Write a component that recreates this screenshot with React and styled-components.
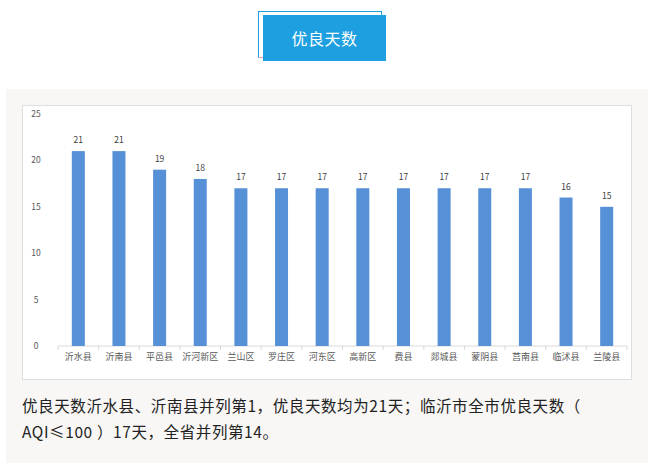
import React from "react";
import styled, { createGlobalStyle } from "styled-components";

const Global = createGlobalStyle`
  body { margin: 0; background: #fff; font-family: "Microsoft YaHei", "Noto Sans CJK SC", sans-serif; }
`;
const Page = styled.div`width: 657px; height: 471px; display: flex; flex-direction: column; align-items: flex-start;`;
const BtnWrap = styled.div`position: relative; margin: 11px 0 0 258px; width: 128px; height: 50px;`;
const Frame = styled.div`position: absolute; left: 0; top: 0; width: 122px; height: 45px; border: 1px solid #1e9fe0; border-bottom-color: #f0a0a8;`;
const Btn = styled.div`position: absolute; left: 5px; top: 4px; width: 123px; height: 46px; background: #1e9fe0; color: #fff; font-size: 16px; display: flex; align-items: center; justify-content: center; letter-spacing: 0.5px;`;
const Panel = styled.div`margin: 28px 0 0 6px; width: 642px; height: 374px; background: #f8f7f5; box-sizing: border-box; padding: 16px 0 0 16px;`;
const ChartBox = styled.div`width: 610px; height: 275px; background: #fff; border: 1px solid #dedede; box-sizing: border-box;`;
const Text = styled.p`margin: 12px 0 0 0; font-size: 15.5px; line-height: 26px; color: #222; letter-spacing: 0.6px;`;

const data = [["沂水县",21],["沂南县",21],["平邑县",19],["沂河新区",18],["兰山区",17],["罗庄区",17],["河东区",17],["高新区",17],["费县",17],["郯城县",17],["蒙阴县",17],["莒南县",17],["临沭县",16],["兰陵县",15]];

function Chart() {
  const x0 = 35, x1 = 604, y0 = 240, k = 9.28, w = (x1 - x0) / 14;
  return (
    <svg width="608" height="273" style={{ display: "block" }} fontFamily="'Microsoft YaHei','Noto Sans CJK SC',sans-serif">
      {[0,5,10,15,20,25].map(v => (
        <text key={v} x="13" y={y0 - v * k + 3} fontSize="8.5" fill="#595959" textAnchor="middle">{v}</text>
      ))}
      <line x1={x0} x2={x1} y1={y0} y2={y0} stroke="#d9d9d9" />
      {data.map(([n, v], i) => {
        const cx = x0 + w * i + w / 2;
        const h = v * k;
        return (
          <g key={n}>
            <line x1={x0 + w * i} x2={x0 + w * i} y1={y0} y2={y0 + 4} stroke="#d9d9d9" />
            <rect x={cx - 6.5} y={y0 - h} width="13" height={h} fill="#5690d6" />
            <text x={cx} y={y0 - h - 8} fontSize="8.5" fill="#404040" textAnchor="middle">{v}</text>
            <text x={cx} y={y0 + 14} fontSize="9" fill="#595959" textAnchor="middle">{n}</text>
          </g>
        );
      })}
      <line x1={x1} x2={x1} y1={y0} y2={y0 + 4} stroke="#d9d9d9" />
    </svg>
  );
}

export default function App() {
  return (
    <Page>
      <Global />
      <BtnWrap><Frame /><Btn>优良天数</Btn></BtnWrap>
      <Panel>
        <ChartBox><Chart /></ChartBox>
        <Text>优良天数沂水县、沂南县并列第1，优良天数均为21天；临沂市全市优良天数（ AQI≤100 ）17天，全省并列第14。</Text>
      </Panel>
    </Page>
  );
}
